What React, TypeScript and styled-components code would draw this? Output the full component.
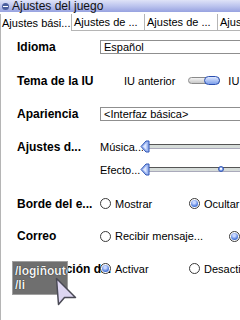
import React from 'react';
import styled, { createGlobalStyle } from 'styled-components';

const FONT = '"Liberation Sans", Arial, sans-serif';

const GlobalStyle = createGlobalStyle`
  html, body {
    margin: 0;
    padding: 0;
    background: #fff;
  }
  body {
    font-family: ${FONT};
    font-size: 11px;
    color: #000;
  }
`;

const Window = styled.div`
  width: 240px;
  height: 320px;
  overflow: hidden;
  display: flex;
  flex-direction: column;
  background: #fff;
  position: relative;
`;

const TitleBar = styled.div`
  height: 12px;
  display: flex;
  align-items: center;
  gap: 3px;
  padding-left: 2px;
  background: linear-gradient(#dfe3f7 0%, #bcc4ee 50%, #97a2e0 100%);
  font-size: 12px;
  color: #111;
  flex-shrink: 0;
`;

const TitleIcon = styled.span`
  width: 7px;
  height: 7px;
  border-radius: 50%;
  background: #4b5f9e;
  position: relative;
  &::after {
    content: '';
    position: absolute;
    left: 1px;
    right: 1px;
    top: 3px;
    height: 1px;
    background: #fff;
  }
`;

const TabStrip = styled.div`
  display: flex;
  height: 17px;
  margin-top: 2px;
  flex-shrink: 0;
`;

const Tab = styled.div<{ $active?: boolean }>`
  width: ${(p) => (p.$active ? 72 : 73)}px;
  flex-shrink: 0;
  box-sizing: border-box;
  padding-left: ${(p) => (p.$active ? 1 : 2)}px;
  display: flex;
  align-items: center;
  white-space: nowrap;
  overflow: hidden;
  font-size: 11px;
  border-right: 1px solid #b5b5b5;
  border-left: ${(p) => (p.$active ? '1px solid #b5b5b5' : 'none')};
  border-bottom: ${(p) => (p.$active ? 'none' : '1px solid #b5b5b5')};
`;

const Panel = styled.div`
  flex: 1;
  border-left: 1px solid #b5b5b5;
  position: relative;
`;

const Row = styled.div<{ $h: number }>`
  height: ${(p) => p.$h}px;
  display: flex;
  align-items: center;
  padding-left: 16px;
  position: relative;
`;

const SliderRow = styled.div`
  height: 57px;
  box-sizing: border-box;
  padding: 5px 0 6px 16px;
  display: flex;
`;

const Label = styled.div`
  width: 83px;
  flex-shrink: 0;
  font-weight: bold;
  font-size: 12px;
  white-space: nowrap;
`;

const SliderLabel = styled(Label)`
  height: 23px;
  display: flex;
  align-items: center;
`;

const Value = styled.div`
  flex: 1;
  display: flex;
  align-items: center;
  white-space: nowrap;
`;

const Select = styled.div`
  width: 150px;
  flex-shrink: 0;
  height: 14px;
  box-sizing: border-box;
  border: 1px solid #8f8f8f;
  padding-left: 3px;
  display: flex;
  align-items: center;
  font-size: 11px;
`;

const ThemeText = styled.span<{ $ml: number }>`
  margin-left: ${(p) => p.$ml}px;
`;

const Toggle = styled.span`
  margin-left: 13px;
  width: 32px;
  height: 7px;
  box-sizing: border-box;
  border: 1px solid #8a8a8a;
  border-radius: 4px;
  background: linear-gradient(#f4f4f4, #c8c8c8);
  position: relative;
  flex-shrink: 0;
  &::after {
    content: '';
    position: absolute;
    right: -1px;
    top: -2px;
    width: 16px;
    height: 9px;
    box-sizing: border-box;
    border: 1px solid #2a4fb0;
    border-radius: 5px;
    background: linear-gradient(#dfe8ff, #7ea0ea);
  }
`;

const SliderLines = styled.div`
  flex: 1;
  display: flex;
  flex-direction: column;
`;

const SliderLine = styled.div`
  height: 23px;
  display: flex;
  align-items: center;
`;

const SliderName = styled.span`
  width: 43px;
  flex-shrink: 0;
  overflow: hidden;
`;

const Track = styled.div`
  width: 120px;
  flex-shrink: 0;
  height: 5px;
  margin-left: 2px;
  box-sizing: border-box;
  border-top: 1px solid #555;
  border-bottom: 1px solid #aab;
  background: #d6dcd9;
  position: relative;
`;

const Thumb = styled.svg`
  position: absolute;
  left: -5px;
  top: -5px;
`;

const Knob = styled.span<{ $x: number }>`
  position: absolute;
  left: ${(p) => p.$x}px;
  top: -2px;
  width: 6px;
  height: 6px;
  box-sizing: border-box;
  border-radius: 50%;
  border: 1px solid #3358b8;
  background: radial-gradient(circle at 50% 40%, #fff 0 30%, #86a4ea 40%);
`;

const Option = styled.span`
  min-width: 89px;
  box-sizing: border-box;
  padding-right: 26px;
  display: inline-flex;
  align-items: center;
  gap: 4px;
  flex-shrink: 0;
`;

const Radio = styled.span<{ $on?: boolean }>`
  width: 11px;
  height: 11px;
  box-sizing: border-box;
  border-radius: 50%;
  border: 1px solid #3a3a3a;
  background: #fff;
  display: inline-flex;
  align-items: center;
  justify-content: center;
  flex-shrink: 0;
  &::after {
    content: '';
    display: ${(p) => (p.$on ? 'block' : 'none')};
    width: 7px;
    height: 7px;
    border-radius: 50%;
    background: radial-gradient(circle at 45% 35%, #c9d8ff 0 20%, #3f6fd6 70%);
  }
`;

const Tooltip = styled.div`
  position: absolute;
  left: 11px;
  top: 9px;
  width: 56px;
  height: 34px;
  box-sizing: border-box;
  border: 1px solid #a0a0a0;
  background: #6f6f6f;
  color: #f2f2f2;
  font-size: 12px;
  font-weight: bold;
  line-height: 14px;
  padding: 2px 0 0 2px;
  overflow: hidden;
  white-space: nowrap;
  text-shadow: 0 0 1px #000;
`;

const Cursor = styled.svg`
  position: absolute;
  left: 54px;
  top: 25px;
`;

const SliderThumbIcon = () => (
  <Thumb width="10" height="13" viewBox="0 0 10 13">
    <path d="M1 6.5 L6 1 H9 V12 H6 Z" fill="#9db6f0" stroke="#2f55b5" strokeWidth="1" />
    <path d="M3 6.5 L6.5 3 V10 Z" fill="#dfe8ff" />
  </Thumb>
);

const Slider = ({ knob }: { knob?: number }) => (
  <Track>
    <SliderThumbIcon />
    {knob !== undefined && <Knob $x={knob} />}
  </Track>
);

export default function App() {
  return (
    <>
      <GlobalStyle />
      <Window>
        <TitleBar>
          <TitleIcon />
          <span>Ajustes del juego</span>
        </TitleBar>
        <TabStrip>
          <Tab $active>Ajustes bási...</Tab>
          <Tab>Ajustes de ...</Tab>
          <Tab>Ajustes de ...</Tab>
          <Tab>Ajustes de ...</Tab>
        </TabStrip>
        <Panel>
          <Row $h={32}>
            <Label>Idioma</Label>
            <Value>
              <Select>Español</Select>
            </Value>
          </Row>
          <Row $h={35}>
            <Label>Tema de la IU</Label>
            <Value>
              <ThemeText $ml={24}>IU anterior</ThemeText>
              <Toggle />
              <ThemeText $ml={8}>IU nueva</ThemeText>
            </Value>
          </Row>
          <Row $h={32}>
            <Label>Apariencia</Label>
            <Value>
              <Select>&lt;Interfaz básica&gt;</Select>
            </Value>
          </Row>
          <SliderRow>
            <SliderLabel>Ajustes d...</SliderLabel>
            <SliderLines>
              <SliderLine>
                <SliderName>Música...</SliderName>
                <Slider />
              </SliderLine>
              <SliderLine>
                <SliderName>Efecto...</SliderName>
                <Slider knob={73} />
              </SliderLine>
            </SliderLines>
          </SliderRow>
          <Row $h={33}>
            <Label>Borde del e...</Label>
            <Value>
              <Option><Radio />Mostrar</Option>
              <Option><Radio $on />Ocultar</Option>
            </Value>
          </Row>
          <Row $h={32}>
            <Label>Correo</Label>
            <Value>
              <Option><Radio />Recibir mensaje...</Option>
              <Option><Radio $on />Rechazar</Option>
            </Value>
          </Row>
          <Row $h={33}>
            <Label>Modificación d...</Label>
            <Value>
              <Option><Radio $on />Activar</Option>
              <Option><Radio />Desactivar</Option>
            </Value>
            <Tooltip>
              /logiñoutción
              <br />
              /li
            </Tooltip>
            <Cursor width="22" height="30" viewBox="0 0 22 30">
              <path d="M1.5 1.5 L3.5 27.5 L9.5 20.5 L20.5 20.5 Z" fill="#ddd6f2" stroke="#4a4a55" strokeWidth="1.5" strokeLinejoin="round" />
            </Cursor>
          </Row>
        </Panel>
      </Window>
    </>
  );
}
